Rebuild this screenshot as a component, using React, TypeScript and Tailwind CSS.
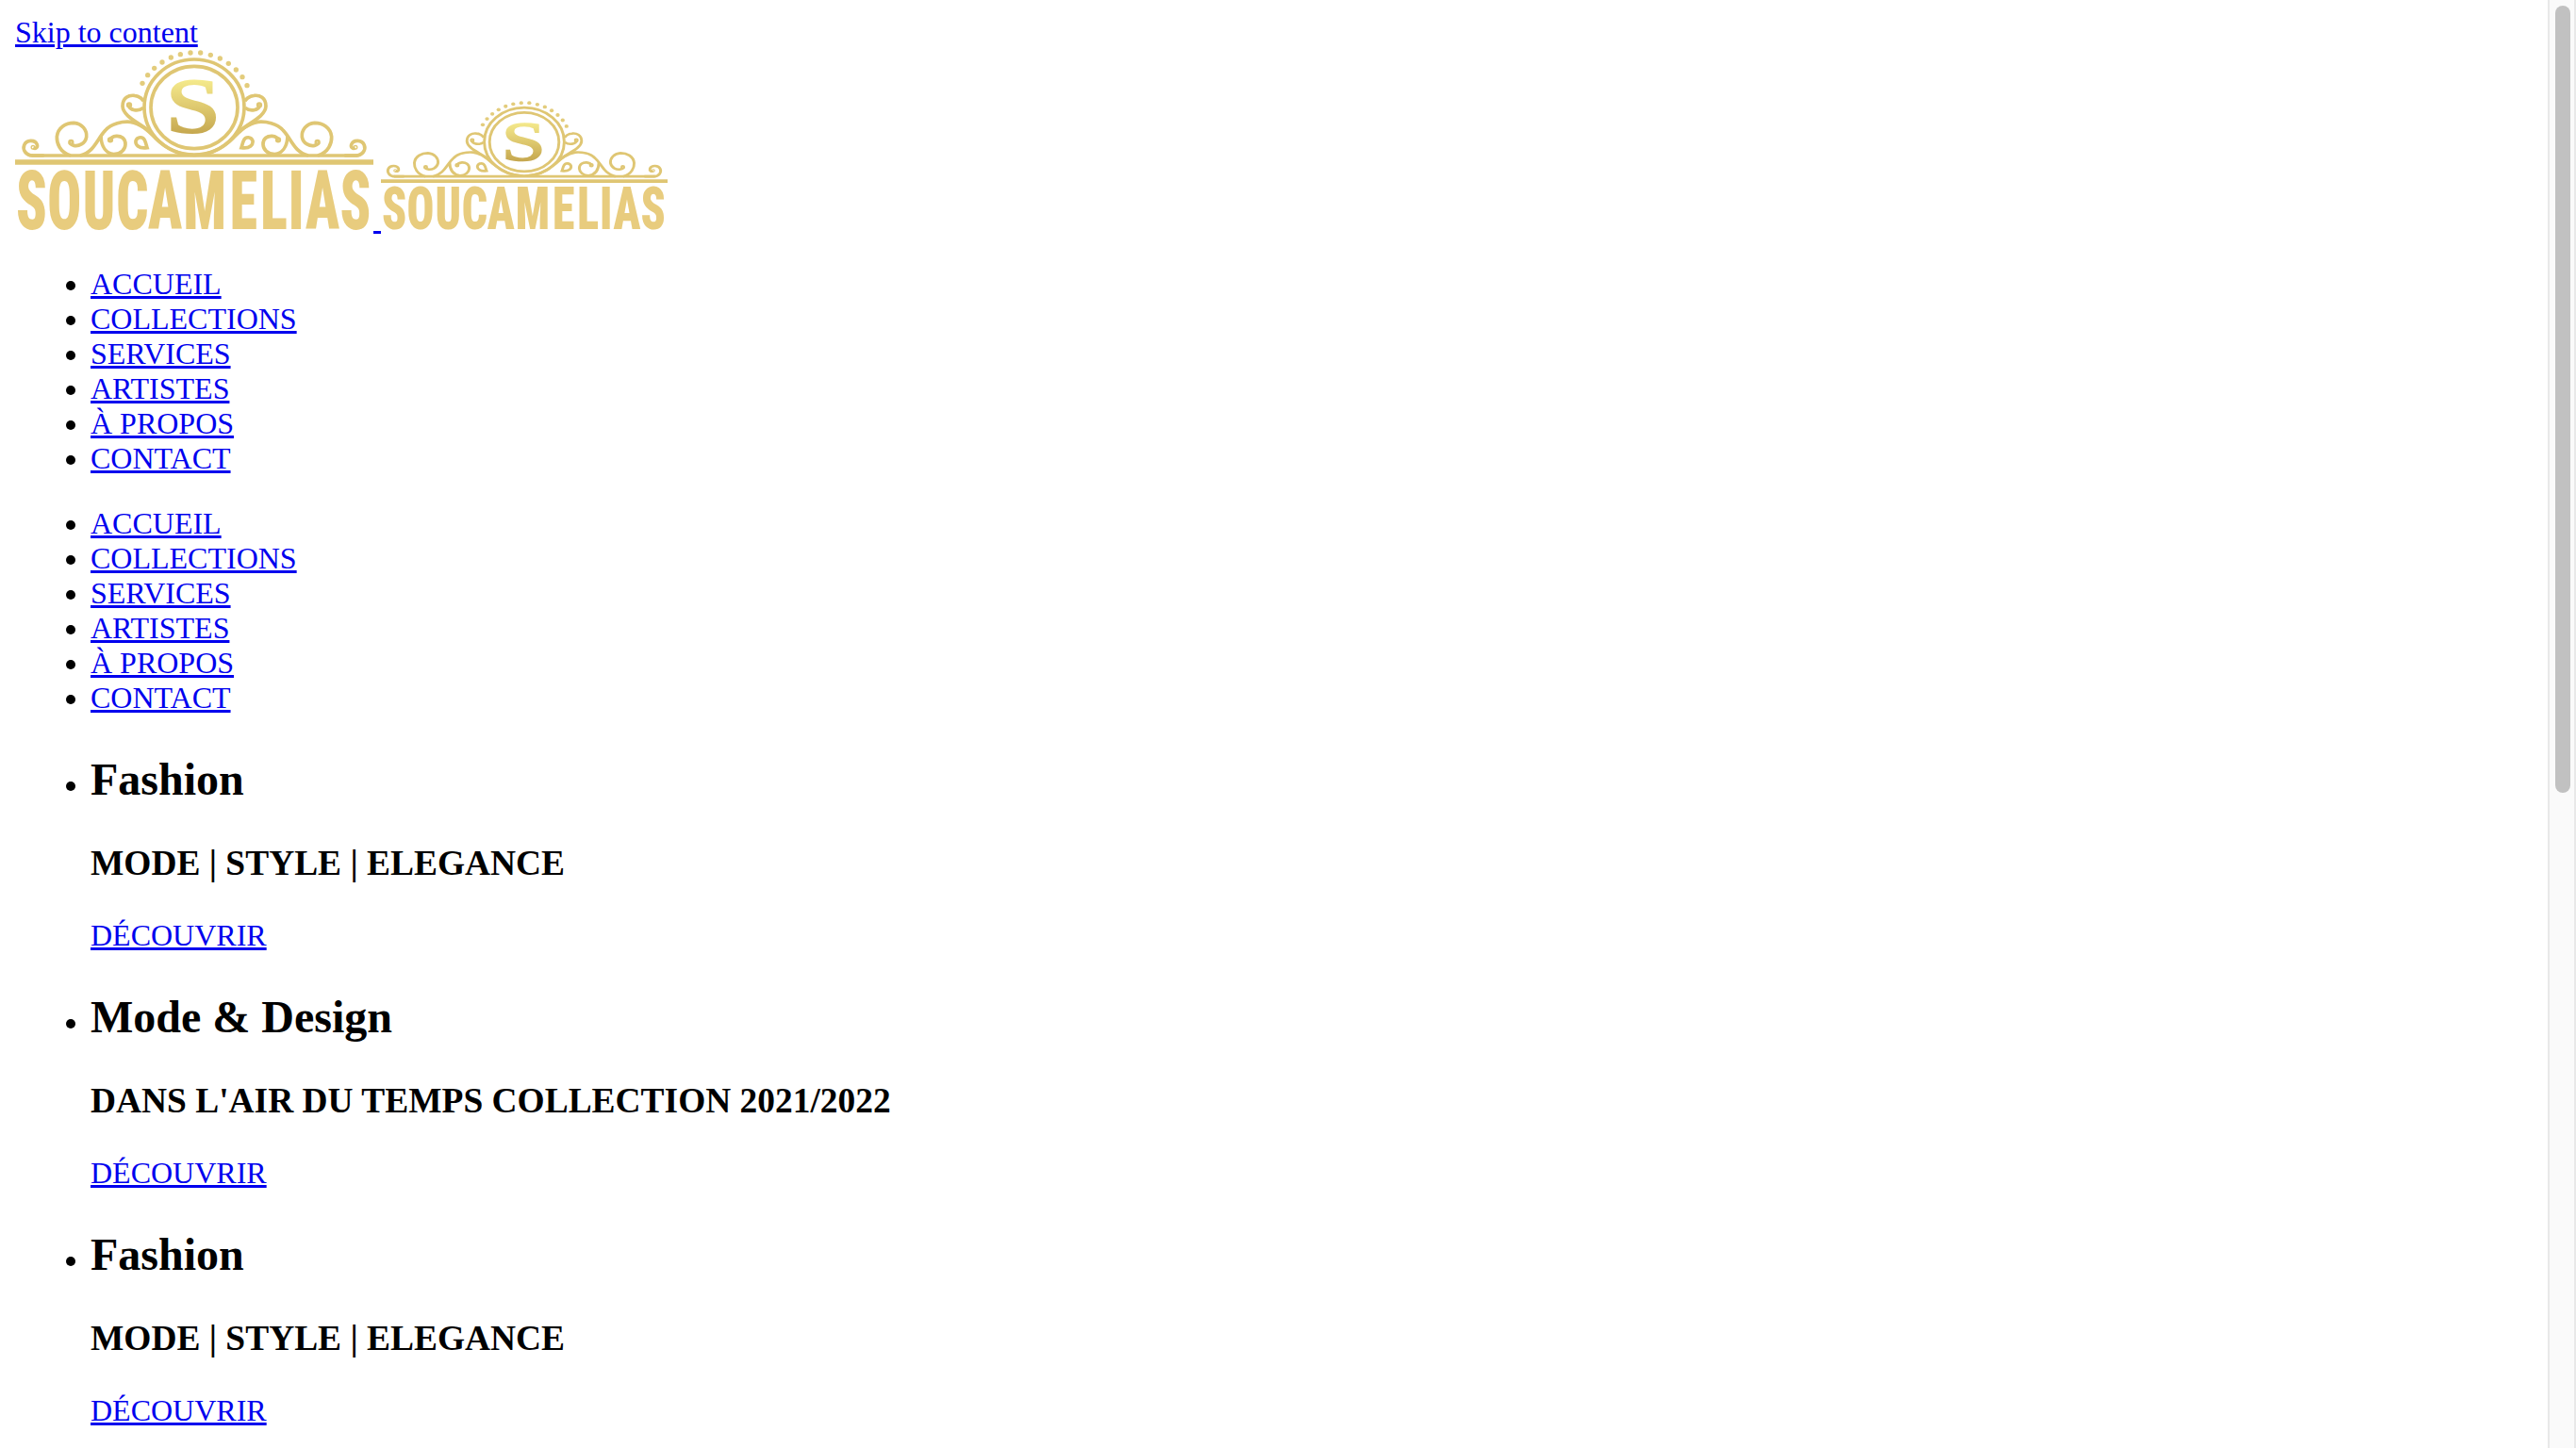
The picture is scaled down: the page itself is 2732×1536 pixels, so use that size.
const dots = [
  [453, 265], [470, 239], [491, 217], [516, 198], [544, 183], [574, 173], [606, 168],
  [638, 168], [670, 175], [700, 186], [727, 202], [751, 222], [771, 245], [786, 272],
];

const menu = ['ACCUEIL', 'COLLECTIONS', 'SERVICES', 'ARTISTES', 'À PROPOS', 'CONTACT'];

const slides = [
  { title: 'Fashion', text: 'MODE | STYLE | ELEGANCE' },
  { title: 'Mode & Design', text: "DANS L'AIR DU TEMPS COLLECTION 2021/2022" },
  { title: 'Fashion', text: 'MODE | STYLE | ELEGANCE' },
];

const link = 'text-[#0000ee] underline decoration-[3px] underline-offset-[2px]';

function Scrolls() {
  return (
    <g>
      <path d="M140 495H105C80 495 72 475 77 462C84 444 112 444 118 460C121 470 112 475 106 470" />
      <path d="M225 495C190 485 180 455 181 435C184 405 210 391 235 391C262 393 277 415 275 436C271 458 250 466 235 463C226 461 222 456 224 453" />
      <path d="M255 495C300 485 310 440 335 415C355 392 390 386 415 388C450 393 475 420 495 440C530 475 570 493 618 493" />
      <path d="M321 432C322 470 340 488 362 491C385 491 398 475 399 460C400 440 385 432 370 433C358 434 352 440 350 446" />
      <path d="M485 427C450 392 392 374 390 338C390 310 410 302 428 304C445 305 455 318 457 322" />
      <path d="M456 343C440 356 412 352 409 334" />
      <path d="M468 470C440 474 430 460 432 448C437 434 455 434 460 446C465 455 465 462 468 470Z" />
      <circle cx="105" cy="469" r="2" />
      <circle cx="226" cy="453" r="4" />
      <circle cx="351" cy="445" r="4" />
      <circle cx="411" cy="334" r="4" />
    </g>
  );
}

function Logo({ id, className }: { id: string; className: string }) {
  return (
    <svg viewBox="48 159 1140 570" preserveAspectRatio="none" className={className}>
      <defs>
        <linearGradient id={id} x1="0" y1="0" x2="0" y2="1">
          <stop offset="0.15" stopColor="#f8ef90" />
          <stop offset="0.5" stopColor="#dfca70" />
          <stop offset="0.85" stopColor="#c3a44c" />
        </linearGradient>
      </defs>
      <g fill="none" stroke="#dfc673" strokeWidth="11">
        <ellipse cx="618" cy="341" rx="159" ry="152" />
        <ellipse cx="618" cy="342" rx="138" ry="131" />
        <path d="M100 495H1138" />
        <path d="M48 516H1188" strokeWidth="16" />
        <Scrolls />
        <g transform="matrix(-1 0 0 1 1236 0)">
          <Scrolls />
        </g>
      </g>
      {dots.map(([x, y]) => (
        <circle key={x} cx={x} cy={y} r="8" fill="#e3cc7c" />
      ))}
      <text
        transform="translate(615 421) scale(1.28 1)"
        textAnchor="middle"
        fill={`url(#${id})`}
        stroke={`url(#${id})`}
        strokeWidth="6"
        className="font-['Liberation_Serif'] text-[248px]"
      >
        S
      </text>
      <text
        transform="translate(50 728) scale(.69 1)"
        dx="2 .9 6.1 3.9 -1.8 5.4 16.7 14.4 4.6 3.9 1.1"
        fill="#e8cc7e"
        className="font-['Roboto'] text-[260px] font-black [font-stretch:75%]"
      >
        SOUCAMELIAS
      </text>
    </svg>
  );
}

function Menu() {
  return (
    <ul className="mt-8 list-disc pl-20">
      {menu.map((item) => (
        <li key={item}>
          <a href="#" className={link}>{item}</a>
        </li>
      ))}
    </ul>
  );
}

export default function App() {
  return (
    <div className="flex h-[1536px] overflow-hidden bg-white font-['Liberation_Serif',serif] text-[32px] leading-[37px] text-black">
      <main className="flex-1 p-4">
        <a href="#" className={`block w-fit ${link}`}>Skip to content</a>
        <div className="h-[198px] whitespace-nowrap">
          <a href="#" className={link}>
            <Logo id="gold" className="inline-block h-[190px] w-[380px] overflow-visible align-baseline" />
            {' '}
            <Logo id="gold-small" className="inline-block h-[136px] w-[304px] overflow-visible align-baseline" />
          </a>
        </div>
        <Menu />
        <Menu />
        <ul className="mt-10 list-disc space-y-10 pl-20">
          {slides.map((slide, i) => (
            <li key={i} className="h-[212px]">
              <h2 className="text-[48px] leading-[55px] font-bold">{slide.title}</h2>
              <h3 className="mt-10 text-[37.44px] leading-[43px] font-bold">{slide.text}</h3>
              <a href="#" className={`mt-[37px] block w-fit ${link}`}>DÉCOUVRIR</a>
            </li>
          ))}
        </ul>
      </main>
      <div className="w-[30px] border-x-2 border-[#e8e8e8] bg-[#fafafa] px-1.5 pt-1.5">
        <div className="h-[835px] w-4 rounded-full bg-[#c1c1c1]" />
      </div>
    </div>
  );
}
